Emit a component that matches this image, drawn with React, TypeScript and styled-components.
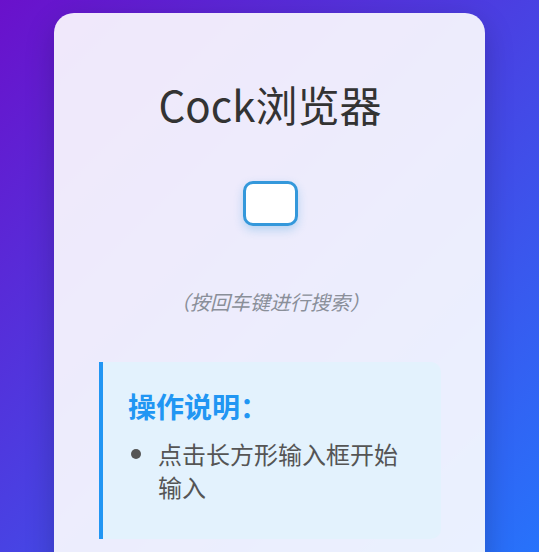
import React from 'react';
import styled, { createGlobalStyle } from 'styled-components';

const GlobalStyle = createGlobalStyle`
  html, body {
    margin: 0;
    padding: 0;
  }
  body {
    min-height: 100vh;
    background: linear-gradient(135deg, #6a11cb 0%, #2575fc 100%);
    font-family: "Noto Sans CJK SC", "Noto Sans", sans-serif;
    overflow: hidden;
  }
`;

const Page = styled.div`
  display: flex;
  justify-content: center;
  padding-top: 13px;
  min-height: 100vh;
  box-sizing: border-box;
`;

const Card = styled.div`
  width: 80%;
  box-sizing: border-box;
  background: rgba(255, 255, 255, 0.9);
  border-radius: 20px;
  box-shadow: 0 10px 30px rgba(0, 0, 0, 0.2);
  padding: 40px 44px 40px 45px;
  display: flex;
  flex-direction: column;
  align-items: center;
`;

const Title = styled.h1`
  margin: 22px 0 0;
  font-size: 42px;
  font-weight: 400;
  line-height: 58px;
  color: #333;
`;

const SearchBox = styled.input`
  margin-top: 48px;
  width: 55px;
  height: 45px;
  box-sizing: border-box;
  border: 3px solid #3498db;
  border-radius: 10px;
  background: #fff;
  outline: none;
  box-shadow: 0 4px 10px rgba(52, 152, 219, 0.3);
`;

const Hint = styled.p`
  margin: 63px 0 0;
  font-size: 20px;
  line-height: 26px;
  font-style: italic;
  color: #8a8f99;
`;

const InfoBox = styled.div`
  align-self: stretch;
  margin-top: 47px;
  background: #e3f2fd;
  border-left: 4px solid #2196f3;
  border-radius: 0 10px 10px 0;
  padding: 24px 25px 36px;
`;

const InfoTitle = styled.h3`
  margin: 0;
  font-size: 28px;
  line-height: 40px;
  font-weight: 700;
  color: #2196f3;
`;

const InfoList = styled.ul`
  margin: 10px 0 0;
  padding-left: 30px;
  color: #555;
`;

const InfoItem = styled.li`
  font-size: 24px;
  line-height: 33px;
  &::marker {
    font-size: 26px;
  }
`;

export default function App() {
  return (
    <>
      <GlobalStyle />
      <Page>
        <Card>
          <Title>Cock浏览器</Title>
          <SearchBox type="text" />
          <Hint>（按回车键进行搜索）</Hint>
          <InfoBox>
            <InfoTitle>操作说明：</InfoTitle>
            <InfoList>
              <InfoItem>点击长方形输入框开始输入</InfoItem>
            </InfoList>
          </InfoBox>
        </Card>
      </Page>
    </>
  );
}
